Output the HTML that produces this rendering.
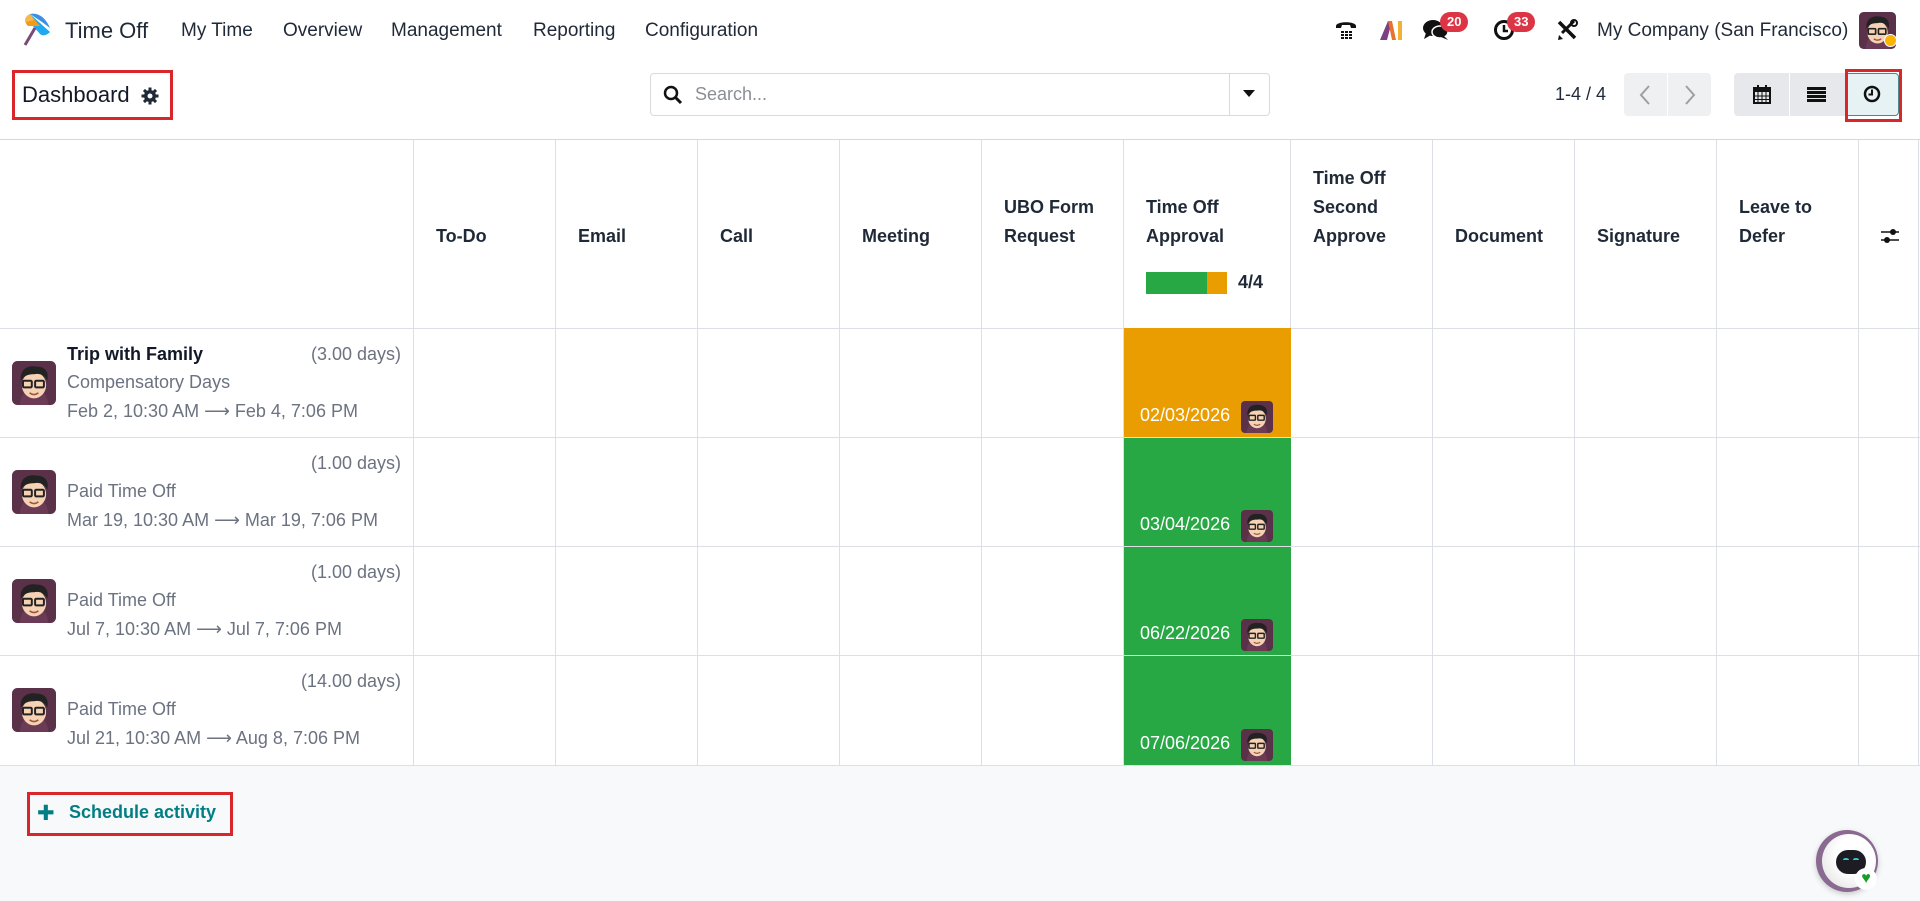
<!DOCTYPE html>
<html><head><meta charset="utf-8"><style>
*{box-sizing:border-box;margin:0;padding:0}
body{width:1920px;height:901px;overflow:hidden;background:#fff;font-family:"Liberation Sans","DejaVu Sans",sans-serif;color:#1f2937;position:relative}
.a{position:absolute;white-space:nowrap}
.nav{font-size:19px;color:#1f2937;top:20px}
.vl{position:absolute;top:140px;height:625px;width:1px;background:#dcdfe3}
.hl{position:absolute;left:0;width:1920px;height:1px;background:#dcdfe3}
.th{position:absolute;font-size:18px;font-weight:bold;color:#1f2937;line-height:29px;white-space:nowrap}
.t1{font-size:18px;font-weight:bold;color:#111827}
.mut{font-size:18px;color:#6b7280}
.cell{position:absolute;left:1124px;width:167px;height:109px}
.date{position:absolute;left:16px;bottom:11px;color:#fff;font-size:18px}
.sav{position:absolute;left:117px;bottom:4px;width:32px;height:32px}
.badge{position:absolute;background:#dc3545;color:#fff;font-size:13px;font-weight:bold;border-radius:12px;padding:3px 7px;line-height:14px}
</style></head><body>
<svg width="0" height="0" style="position:absolute"><defs>
<symbol id="av" viewBox="0 0 40 40"><rect width="40" height="40" rx="5" fill="#5a3148"/><path d="M7 40 C8 30 12 26 20 26 C28 26 32 30 33 40Z" fill="#6b3a55"/><ellipse cx="20" cy="22" rx="11" ry="12" fill="#f6d2b4"/><path d="M8 18 C7 6 16 4 22 5 C30 5 34 10 32 18 C30 12 24 11 20 12 C15 12 11 13 8 18Z" fill="#222"/><rect x="10" y="18" width="8" height="6" rx="1" fill="none" stroke="#222" stroke-width="1.8"/><rect x="21" y="18" width="8" height="6" rx="1" fill="none" stroke="#222" stroke-width="1.8"/><path d="M16 29 Q20 32 24 29" stroke="#a0523d" stroke-width="1.5" fill="none"/></symbol>
</defs></svg>

<!-- top nav -->
<svg class="a" style="left:20px;top:12px" width="34" height="36" viewBox="0 0 34 36"><path d="M10 2 L30 20 C26 24 22 24 20 22 L6 6Z" fill="#1eaaf1"/><path d="M10 2 C18 0 26 6 30 16 L22 10Z" fill="#3b8fe6"/><path d="M10 2 L20 14 L8 14 C4 10 4 5 10 2Z" fill="#f29a1a"/><path d="M10 2 L14 8 L6 10 C5 6 7 3 10 2Z" fill="#f8b84a"/><line x1="15" y1="16" x2="5" y2="33" stroke="#7b4a75" stroke-width="3"/></svg>
<div class="a" style="left:65px;top:18px;font-size:22px;color:#1f2937">Time Off</div>
<div class="a nav" style="left:181px">My Time</div>
<div class="a nav" style="left:283px">Overview</div>
<div class="a nav" style="left:391px">Management</div>
<div class="a nav" style="left:533px">Reporting</div>
<div class="a nav" style="left:645px">Configuration</div>

<svg class="a" style="left:1335px;top:19px" width="22" height="22" viewBox="0 0 22 22"><path d="M1 7 C1 2 21 2 21 7 L21 9 L16 9 L15 6 L7 6 L6 9 L1 9Z" fill="#111"/><g fill="#111"><rect x="6" y="12" width="3" height="2"/><rect x="10" y="12" width="3" height="2"/><rect x="14" y="12" width="3" height="2"/><rect x="6" y="15" width="3" height="2"/><rect x="10" y="15" width="3" height="2"/><rect x="14" y="15" width="3" height="2"/><rect x="6" y="18" width="3" height="2"/><rect x="10" y="18" width="3" height="2"/><rect x="14" y="18" width="3" height="2"/></g></svg>
<svg class="a" style="left:1380px;top:19px" width="24" height="22" viewBox="0 0 24 22"><path d="M0 21 L8 2 L12 2 L7 21Z" fill="#7b3f86"/><path d="M8 2 L12 2 L16 21 L12 21Z" fill="#e8732f"/><rect x="18" y="2" width="4" height="19" fill="#f2b233"/></svg>
<svg class="a" style="left:1423px;top:19px" width="26" height="22" viewBox="0 0 26 22"><ellipse cx="10" cy="9" rx="10" ry="8" fill="#111"/><path d="M3 14 L1 20 L8 16Z" fill="#111"/><ellipse cx="17" cy="13" rx="8" ry="6" fill="#111" stroke="#fff" stroke-width="1.5"/><path d="M21 17 L25 21 L18 18Z" fill="#111"/></svg>
<div class="badge" style="left:1440px;top:12px">20</div>
<svg class="a" style="left:1493px;top:19px" width="22" height="22" viewBox="0 0 22 22"><circle cx="11" cy="11" r="8.5" fill="none" stroke="#111" stroke-width="3"/><path d="M11 6 L11 12 L15 12" stroke="#111" stroke-width="2.5" fill="none"/></svg>
<div class="badge" style="left:1507px;top:12px">33</div>
<svg class="a" style="left:1556px;top:19px" width="22" height="22" viewBox="0 0 22 22"><path d="M3 3 L19 19" stroke="#111" stroke-width="3.5"/><path d="M18 2 L6 14" stroke="#111" stroke-width="3"/><path d="M3 16 L7 20 L2 21Z" fill="#111"/><circle cx="18" cy="4" r="3" fill="none" stroke="#111" stroke-width="2"/></svg>
<div class="a" style="left:1597px;top:20px;font-size:19px;color:#1f2937">My Company (San Francisco)</div>
<svg class="a" style="left:1859px;top:12px" width="37" height="37"><use href="#av"/></svg>
<div class="a" style="left:1884px;top:34px;width:13px;height:13px;border-radius:50%;background:#fbb500;border:1.5px solid #fff"></div>

<!-- control bar -->
<div class="a" style="left:12px;top:70px;width:161px;height:50px;border:3px solid #d9262b"></div>
<div class="a" style="left:22px;top:82px;font-size:22px;color:#111827">Dashboard</div>
<svg class="a" style="left:141px;top:87px" width="18" height="18" viewBox="0 0 18 18"><g fill="#1f2937"><circle cx="9" cy="9" r="6"/><rect x="7.5" y="0.5" width="3" height="17"/><rect x="0.5" y="7.5" width="17" height="3"/><rect x="7.5" y="0.5" width="3" height="17" transform="rotate(45 9 9)"/><rect x="7.5" y="0.5" width="3" height="17" transform="rotate(-45 9 9)"/></g><circle cx="9" cy="9" r="2.5" fill="#fff"/></svg>

<div class="a" style="left:650px;top:73px;width:620px;height:43px;border:1px solid #d8dadd;border-radius:4px"></div>
<div class="a" style="left:1229px;top:74px;width:1px;height:41px;background:#d8dadd"></div>
<svg class="a" style="left:663px;top:85px" width="20" height="20" viewBox="0 0 20 20"><circle cx="8" cy="8" r="6" fill="none" stroke="#111" stroke-width="2.5"/><path d="M12.5 12.5 L18 18" stroke="#111" stroke-width="3"/></svg>
<div class="a" style="left:695px;top:84px;font-size:18px;color:#8a8f96">Search...</div>
<svg class="a" style="left:1243px;top:90px" width="12" height="8"><path d="M0 0 L12 0 L6 7Z" fill="#111"/></svg>

<div class="a" style="left:1555px;top:84px;font-size:18px;color:#1f2937">1-4 / 4</div>
<div class="a" style="left:1624px;top:73px;width:87px;height:43px;background:#eef0f2;border-radius:4px"></div>
<div class="a" style="left:1667px;top:73px;width:1px;height:43px;background:#fff"></div>
<svg class="a" style="left:1638px;top:84px" width="16" height="22"><path d="M11 2 L3 11 L11 20" stroke="#9aa0a6" stroke-width="2" fill="none"/></svg>
<svg class="a" style="left:1681px;top:84px" width="16" height="22"><path d="M5 2 L13 11 L5 20" stroke="#9aa0a6" stroke-width="2" fill="none"/></svg>

<div class="a" style="left:1734px;top:73px;width:165px;height:43px;background:#e6e8eb;border-radius:4px"></div>
<div class="a" style="left:1789px;top:73px;width:1px;height:43px;background:#fff"></div>
<div class="a" style="left:1846px;top:73px;width:53px;height:43px;background:#e6f2f3;border:1px solid #4b8a8c;border-radius:0 4px 4px 0"></div>
<div class="a" style="left:1845px;top:69px;width:57px;height:53px;border:3px solid #d9262b"></div>
<svg class="a" style="left:1753px;top:85px" width="18" height="19" viewBox="0 0 18 19"><rect x="1" y="3" width="16" height="15" fill="none" stroke="#111" stroke-width="2"/><rect x="1" y="3" width="16" height="4" fill="#111"/><rect x="4" y="0" width="2" height="5" fill="#111"/><rect x="12" y="0" width="2" height="5" fill="#111"/><path d="M1 11 H17 M1 14.5 H17 M5 7 V18 M9 7 V18 M13 7 V18" stroke="#111" stroke-width="1"/></svg>
<svg class="a" style="left:1807px;top:87px" width="19" height="15"><rect y="0" width="19" height="3" fill="#111"/><rect y="4" width="19" height="3" fill="#111"/><rect y="8" width="19" height="3" fill="#111"/><rect y="12" width="19" height="3" fill="#111"/></svg>
<svg class="a" style="left:1863px;top:85px" width="18" height="18" viewBox="0 0 18 18"><circle cx="9" cy="9" r="7" fill="none" stroke="#111" stroke-width="2.5"/><path d="M9 4.5 V9.5 H5.5" stroke="#111" stroke-width="2" fill="none"/></svg>

<!-- table -->
<div class="hl" style="top:139px;background:#d6d8db"></div>
<div class="hl" style="top:328px"></div>
<div class="hl" style="top:437px"></div>
<div class="hl" style="top:546px"></div>
<div class="hl" style="top:655px"></div>
<div class="hl" style="top:765px"></div>
<div class="vl" style="left:413px"></div><div class="vl" style="left:555px"></div><div class="vl" style="left:697px"></div><div class="vl" style="left:839px"></div><div class="vl" style="left:981px"></div><div class="vl" style="left:1123px"></div><div class="vl" style="left:1290px"></div><div class="vl" style="left:1432px"></div><div class="vl" style="left:1574px"></div><div class="vl" style="left:1716px"></div><div class="vl" style="left:1858px"></div><div class="vl" style="left:1918px"></div>

<div class="th" style="left:436px;top:222px">To-Do</div>
<div class="th" style="left:578px;top:222px">Email</div>
<div class="th" style="left:720px;top:222px">Call</div>
<div class="th" style="left:862px;top:222px">Meeting</div>
<div class="th" style="left:1004px;top:193px">UBO Form<br>Request</div>
<div class="th" style="left:1146px;top:193px">Time Off<br>Approval</div>
<div class="a" style="left:1146px;top:272px;width:61px;height:22px;background:#28a745"></div>
<div class="a" style="left:1207px;top:272px;width:20px;height:22px;background:#e99d00"></div>
<div class="th" style="left:1238px;top:268px">4/4</div>
<div class="th" style="left:1313px;top:164px">Time Off<br>Second<br>Approve</div>
<div class="th" style="left:1455px;top:222px">Document</div>
<div class="th" style="left:1597px;top:222px">Signature</div>
<div class="th" style="left:1739px;top:193px">Leave to<br>Defer</div>
<svg class="a" style="left:1880px;top:228px" width="20" height="16"><path d="M1 4 H19 M1 12 H19" stroke="#111" stroke-width="1.5"/><circle cx="13" cy="4" r="3" fill="#111"/><circle cx="7" cy="12" r="3" fill="#111"/></svg>

<!-- rows -->
<svg class="a" style="left:12px;top:361px" width="44" height="44"><use href="#av"/></svg>
<div class="a t1" style="left:67px;top:344px">Trip with Family</div>
<div class="a mut" style="right:1519px;top:344px">(3.00 days)</div>
<div class="a mut" style="left:67px;top:372px">Compensatory Days</div>
<div class="a mut" style="left:67px;top:401px">Feb 2, 10:30 AM ⟶ Feb 4, 7:06 PM</div>

<svg class="a" style="left:12px;top:470px" width="44" height="44"><use href="#av"/></svg>
<div class="a mut" style="right:1519px;top:453px">(1.00 days)</div>
<div class="a mut" style="left:67px;top:481px">Paid Time Off</div>
<div class="a mut" style="left:67px;top:510px">Mar 19, 10:30 AM ⟶ Mar 19, 7:06 PM</div>

<svg class="a" style="left:12px;top:579px" width="44" height="44"><use href="#av"/></svg>
<div class="a mut" style="right:1519px;top:562px">(1.00 days)</div>
<div class="a mut" style="left:67px;top:590px">Paid Time Off</div>
<div class="a mut" style="left:67px;top:619px">Jul 7, 10:30 AM ⟶ Jul 7, 7:06 PM</div>

<svg class="a" style="left:12px;top:688px" width="44" height="44"><use href="#av"/></svg>
<div class="a mut" style="right:1519px;top:671px">(14.00 days)</div>
<div class="a mut" style="left:67px;top:699px">Paid Time Off</div>
<div class="a mut" style="left:67px;top:728px">Jul 21, 10:30 AM ⟶ Aug 8, 7:06 PM</div>

<div class="cell" style="top:328px;background:#e99d00"><div class="date">02/03/2026</div><svg class="sav"><use href="#av"/></svg></div>
<div class="cell" style="top:438px;height:108px;background:#28a745"><div class="date">03/04/2026</div><svg class="sav"><use href="#av"/></svg></div>
<div class="cell" style="top:547px;height:108px;background:#28a745"><div class="date">06/22/2026</div><svg class="sav"><use href="#av"/></svg></div>
<div class="cell" style="top:656px;height:109px;background:#28a745"><div class="date">07/06/2026</div><svg class="sav"><use href="#av"/></svg></div>

<!-- bottom -->
<div class="a" style="left:0;top:766px;width:1920px;height:135px;background:#f8f9fa"></div>
<div class="a" style="left:27px;top:792px;width:206px;height:44px;border:3px solid #d9262b"></div>
<div class="a" style="left:37px;top:801px;font-size:21px;font-weight:bold;color:#017e84">✚</div>
<div class="a" style="left:69px;top:802px;font-size:18px;font-weight:bold;color:#017e84">Schedule activity</div>

<div class="a" style="left:1816px;top:830px;width:62px;height:62px;border-radius:50%;background:#8a6a90;box-shadow:0 2px 6px rgba(0,0,0,.2)"></div>
<div class="a" style="left:1822px;top:834px;width:54px;height:54px;border-radius:50%;background:radial-gradient(circle at 60% 40%,#ffffff 40%,#dcdcdc 100%)"></div>
<div class="a" style="left:1836px;top:850px;width:30px;height:24px;border-radius:12px;background:#1c1c22"></div>
<div class="a" style="left:1843px;top:858px;width:6px;height:3px;border-top:2px solid #2ad0d0;border-radius:50%"></div>
<div class="a" style="left:1853px;top:858px;width:6px;height:3px;border-top:2px solid #2ad0d0;border-radius:50%"></div>
<div class="a" style="left:1855px;top:868px;width:22px;height:22px;border-radius:50%;background:#fff;color:#1a9c2a;font-size:16px;text-align:center;line-height:22px">♥</div>
</body></html>
